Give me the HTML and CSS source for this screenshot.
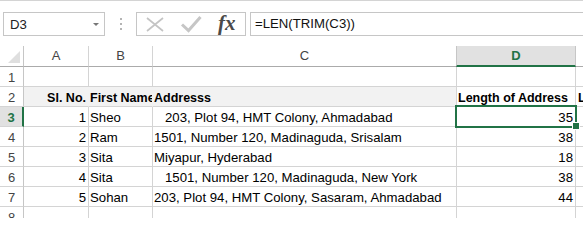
FILE: index.html
```html
<!DOCTYPE html>
<html>
<head>
<meta charset="utf-8">
<link rel="stylesheet" href="styles.css">
</head>
<body>
<div class="topline"></div>
<div class="fbar">
  <div class="namebox">
    <span class="ref">D3</span>
    <span class="caret"></span>
  </div>
  <div class="grip"><i></i><i></i><i></i></div>
  <div class="btns">
    <svg class="ico" width="20" height="16" viewBox="0 0 20 16"><path d="M2 2 L18 15 M18 2 L2 15" stroke="#c4c4c4" stroke-width="1.7" fill="none"/></svg>
    <svg class="ico" width="22" height="18" viewBox="0 0 22 18"><path d="M2 9.5 L8.5 15.5 L20.5 2" stroke="#c6c6c6" stroke-width="3" fill="none"/></svg>
    <span class="fx">fx</span>
  </div>
  <div class="formula">=LEN(TRIM(C3))</div>
</div>
<div class="sheet">
  <div class="corner"><span class="tri"></span></div>
  <div class="ch">A</div>
  <div class="ch">B</div>
  <div class="ch">C</div>
  <div class="ch sel">D</div>
  <div class="ch last"></div>

  <div class="rh">1</div>
  <div class="c"></div><div class="c"></div><div class="c"></div><div class="c"></div><div class="c last"></div>

  <div class="rh">2</div>
  <div class="c b r fill">Sl. No.</div>
  <div class="c b fill">First Name</div>
  <div class="c b fill fillend">Addresss</div>
  <div class="c b">Length of Address</div>
  <div class="c b last">Length</div>

  <div class="rh rsel">3</div>
  <div class="c r">1</div>
  <div class="c">Sheo</div>
  <div class="c">   203, Plot 94, HMT Colony, Ahmadabad</div>
  <div class="c r active">35<span class="selbox"></span><span class="handle"></span></div>
  <div class="c last"></div>

  <div class="rh">4</div>
  <div class="c r">2</div>
  <div class="c">Ram</div>
  <div class="c">1501, Number 120, Madinaguda, Srisalam</div>
  <div class="c r">38</div>
  <div class="c last"></div>

  <div class="rh">5</div>
  <div class="c r">3</div>
  <div class="c">Sita</div>
  <div class="c">Miyapur, Hyderabad</div>
  <div class="c r">18</div>
  <div class="c last"></div>

  <div class="rh">6</div>
  <div class="c r">4</div>
  <div class="c">Sita</div>
  <div class="c">   1501, Number 120, Madinaguda, New York</div>
  <div class="c r">38</div>
  <div class="c last"></div>

  <div class="rh">7</div>
  <div class="c r">5</div>
  <div class="c">Sohan</div>
  <div class="c">203, Plot 94, HMT Colony, Sasaram, Ahmadabad</div>
  <div class="c r">44</div>
  <div class="c last"></div>

  <div class="rh">8</div>
  <div class="c"></div><div class="c"></div><div class="c"></div><div class="c"></div><div class="c last"></div>
</div>
</body>
</html>
```

FILE: styles.css
```css
html, body {
  margin: 0;
  padding: 0;
  background: #ffffff;
  width: 583px;
  height: 218px;
  overflow: hidden;
  font-family: "Liberation Sans", Arial, sans-serif;
}

.topline {
  height: 1px;
  background: #d4d4d4;
}

.fbar {
  display: flex;
  align-items: stretch;
  height: 24px;
  margin-top: 11px;
  margin-bottom: 10px;
  padding-left: 3px;
}

.namebox {
  box-sizing: border-box;
  width: 102px;
  border: 1px solid #c6c6c6;
  display: flex;
  align-items: center;
  justify-content: space-between;
  padding: 0 5px 0 6px;
  font-size: 13.2px;
  color: #222;
}

.ref {
  line-height: 16px;
  padding-top: 1px;
}

.caret {
  width: 0;
  height: 0;
  border-left: 3px solid transparent;
  border-right: 3px solid transparent;
  border-top: 3px solid #777;
  margin-top: 1px;
}

.grip {
  width: 31px;
  display: flex;
  flex-direction: column;
  align-items: center;
  justify-content: center;
  gap: 3px;
}

.grip i {
  display: block;
  width: 2px;
  height: 2px;
  background: #b4b4b4;
}

.btns {
  box-sizing: border-box;
  width: 110px;
  border: 1px solid #c6c6c6;
  display: flex;
  align-items: center;
  padding-left: 8px;
}

.btns .ico {
  display: block;
}

.btns .ico + .ico {
  margin-left: 15px;
  margin-top: -1px;
}

.fx {
  font-family: "Liberation Serif", "Times New Roman", serif;
  font-style: italic;
  font-weight: bold;
  font-size: 21px;
  color: #4a4a4a;
  margin-left: 16px;
  line-height: 20px;
  margin-top: -2px;
}

.formula {
  box-sizing: border-box;
  flex: 1;
  margin-left: 4px;
  border: 1px solid #c6c6c6;
  border-right: none;
  font-size: 13.2px;
  color: #111;
  padding: 3px 0 0 4px;
  line-height: 16px;
}

.sheet {
  display: grid;
  grid-template-columns: 24px 65px 64px 304px 119px 1fr;
  grid-template-rows: 21px repeat(8, 20px);
}

.corner, .ch, .rh, .c {
  box-sizing: border-box;
  border-right: 1px solid #d4d4d4;
  border-bottom: 1px solid #d4d4d4;
  overflow: hidden;
  white-space: pre;
}

.corner {
  position: relative;
  border-right-color: #c6c6c6;
  border-bottom-color: #ababab;
}

.tri {
  position: absolute;
  right: 3px;
  bottom: 3px;
  width: 0;
  height: 0;
  border-left: 12px solid transparent;
  border-bottom: 12px solid #dfdfdf;
}

.ch {
  font-size: 13px;
  color: #444;
  text-align: center;
  padding-top: 3px;
  line-height: 14px;
  border-right-color: #d4d4d4;
  border-bottom-color: #ababab;
}

.ch.sel {
  background: #e1e1e1;
  color: #217346;
  font-weight: bold;
  border-bottom: 2px solid #217346;
  border-right-color: #c6c6c6;
  border-left: 1px solid #c6c6c6;
  margin-left: -1px;
}

.ch.last {
  border-right: none;
}

.rh {
  font-size: 13px;
  color: #444;
  text-align: center;
  padding-top: 3px;
  line-height: 15px;
  border-right-color: #c6c6c6;
}

.rh.rsel {
  background: #e1e1e1;
  color: #217346;
  font-weight: bold;
  border-right: 2px solid #217346;
}

.c {
  font-size: 13.2px;
  color: #000;
  padding: 3px 2px 0 1px;
  line-height: 16px;
}

.c.r {
  text-align: right;
  padding-right: 2px;
}

.c.b {
  font-weight: bold;
  font-size: 12.5px;
}

.c.fill {
  background: #f2f2f2;
  border-right-color: #f2f2f2;
}

.c.fillend {
  border-right-color: #d4d4d4;
}

.c.last {
  border-right: none;
  padding-left: 2px;
}

.c.active {
  position: relative;
  overflow: visible;
}

.selbox {
  position: absolute;
  left: -2px;
  top: -2px;
  width: 122px;
  height: 23px;
  box-sizing: border-box;
  border: 2px solid #217346;
  pointer-events: none;
}

.handle {
  position: absolute;
  left: 116px;
  top: 16px;
  width: 6px;
  height: 6px;
  background: #217346;
  box-shadow: 0 0 0 1px #ffffff;
}
```
